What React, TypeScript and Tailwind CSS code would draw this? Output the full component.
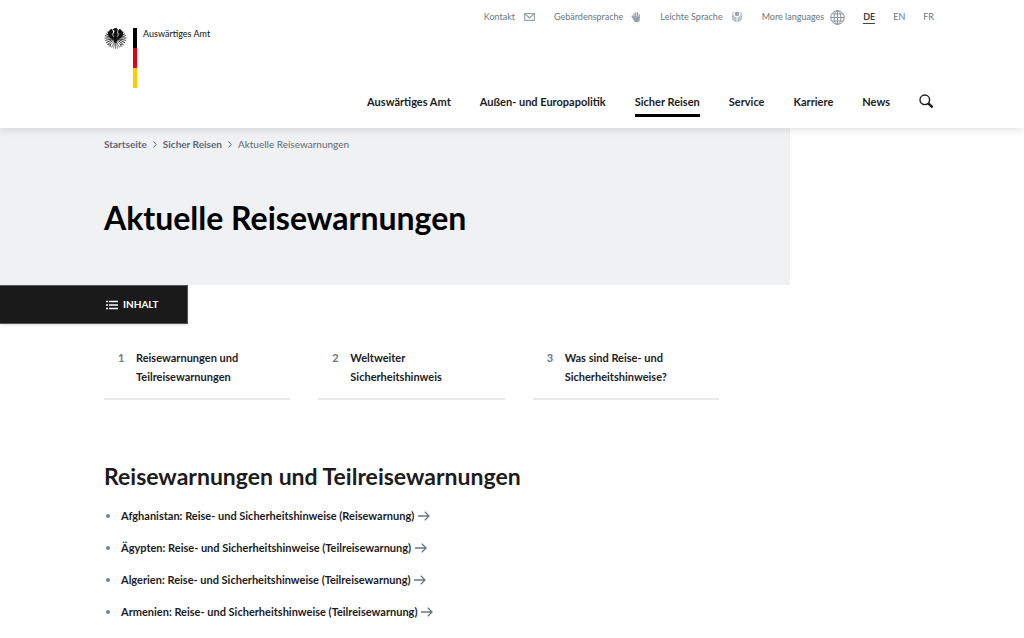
import React from 'react';

type IconProps = { className?: string };

const EagleIcon = ({ className }: IconProps) => (
  <svg className={className} viewBox="0 0 48 48" fill="none" aria-hidden="true">
    {/* wings */}
    <path d="M15 4C19 8 20 12 19 17L20 27C14 26 8 21 7 13C9 9 12 6 15 4Z" fill="#111" />
    <path d="M33 4C29 8 28 12 29 17L28 27C34 26 40 21 41 13C39 9 36 6 33 4Z" fill="#111" />
    <g stroke="#111" strokeWidth="1.8" strokeLinecap="round">
      <path d="M12 17L7 11M12 20L4 15M13 22L2 19M15 24L1 24M17 26L2 29M18 27L4 34M19 29L7 38" />
      <path d="M36 17L41 11M36 20L44 15M35 22L46 19M33 24L47 24M31 26L46 29M30 27L44 34M29 29L41 38" />
    </g>
    {/* head and body */}
    <path d="M17 7C18 4 21 2 25 2C29 3 30 6 28 9L29 15L29 28L26 35H22L19 28L19 16L22 9Z" fill="#111" />
    <path d="M22 7L17 7L20 10Z" fill="#fff" />
    <path d="M20 11L17 16L20 21M28 11L31 16L28 21" stroke="#fff" strokeWidth="1.5" />
    {/* tail and claws */}
    <g stroke="#333" strokeWidth="1.3" strokeLinecap="round">
      <path d="M24 33V47M22 34L20 46M26 34L28 46M21 34L16 44M27 34L32 44" />
      <path d="M20 32L13 38M13 38L8 39M13 38L10 43M13 38L14 43" />
      <path d="M28 32L35 38M35 38L40 39M35 38L38 43M35 38L34 43" />
    </g>
  </svg>
);

const MailIcon = ({ className }: IconProps) => (
  <svg className={className} viewBox="0 0 11 8" fill="none" stroke="currentColor" strokeWidth="1.2" aria-hidden="true">
    <rect x="0.6" y="0.6" width="9.8" height="6.8" />
    <path d="M1 1L5.5 5L10 1" />
  </svg>
);

const HandIcon = ({ className }: IconProps) => (
  <svg className={className} viewBox="0 0 20 24" fill="none" stroke="currentColor" strokeLinecap="round" aria-hidden="true">
    <path d="M6 13V5M9.5 12V2.5M13 12V3.5M16.5 14V7" strokeWidth="2.4" />
    <path d="M5 11L2 9C1 10 1 11 2 12L6 19L8 22H15L17 18V12Z" fill="currentColor" strokeWidth="1" />
  </svg>
);

const ReaderIcon = ({ className }: IconProps) => (
  <svg className={className} viewBox="0 0 24 24" fill="currentColor" aria-hidden="true">
    <circle cx="12" cy="6" r="4.5" />
    <path d="M1 8L11 13V23L3 18Z" opacity="0.8" />
    <path d="M23 8L13 13V23L21 18Z" opacity="0.8" />
    <path d="M7 2L3 5L5 10M17 2L21 5L19 10" fill="none" stroke="currentColor" strokeWidth="1.6" />
    <path d="M4 12L9 15M4.5 15L9 18M20 12L15 15M19.5 15L15 18" stroke="#fff" strokeWidth="0.8" />
  </svg>
);

const GlobeIcon = ({ className }: IconProps) => (
  <svg className={className} viewBox="0 0 15 15" fill="none" stroke="currentColor" aria-hidden="true">
    <circle cx="7.5" cy="7.5" r="6.8" />
    <ellipse cx="7.5" cy="7.5" rx="3.5" ry="6.8" />
    <path d="M7.5 0.7V14.3M0.7 7.5H14.3M1.8 4H13.2M1.8 11H13.2" />
  </svg>
);

const SearchIcon = ({ className }: IconProps) => (
  <svg className={className} viewBox="0 0 15 15" fill="none" stroke="currentColor" aria-hidden="true">
    <circle cx="5.8" cy="5.8" r="4.8" strokeWidth="1.4" />
    <path d="M9.3 9.3L13.6 13.3" strokeWidth="2.5" />
  </svg>
);

const ListIcon = ({ className }: IconProps) => (
  <svg className={className} viewBox="0 0 12 10" stroke="currentColor" aria-hidden="true">
    <path d="M0 1.5H2M3 1.5H12M0 5H2M3 5H12M0 8.5H2M3 8.5H12" strokeWidth="1.3" />
  </svg>
);

const ChevronIcon = ({ className }: IconProps) => (
  <svg className={className} viewBox="0 0 4 7" fill="none" stroke="currentColor" aria-hidden="true">
    <path d="M0.5 0.5L3.2 3.5L0.5 6.5" />
  </svg>
);

const ArrowIcon = ({ className }: IconProps) => (
  <svg className={className} viewBox="0 0 12 10" fill="none" stroke="currentColor" strokeWidth="1.3" aria-hidden="true">
    <path d="M0 5H11M6.8 0.8L11 5L6.8 9.2" />
  </svg>
);

const metaLinks = [
  { label: 'Kontakt', icon: <MailIcon className="ml-[9px] h-2 w-[11px]" /> },
  { label: 'Gebärdensprache', icon: <HandIcon className="ml-2 h-3 w-2.5" /> },
  { label: 'Leichte Sprache', icon: <ReaderIcon className="ml-2 h-3 w-3" /> },
];

const languages = ['DE', 'EN', 'FR'];

const navItems = ['Auswärtiges Amt', 'Außen- und Europapolitik', 'Sicher Reisen', 'Service', 'Karriere', 'News'];

const tocItems = [
  'Reisewarnungen und Teilreisewarnungen',
  'Weltweiter Sicherheitshinweis',
  'Was sind Reise- und Sicherheitshinweise?',
];

const warnings = [
  'Afghanistan: Reise- und Sicherheitshinweise (Reisewarnung)',
  'Ägypten: Reise- und Sicherheitshinweise (Teilreisewarnung)',
  'Algerien: Reise- und Sicherheitshinweise (Teilreisewarnung)',
  'Armenien: Reise- und Sicherheitshinweise (Teilreisewarnung)',
];

const Header = () => (
  <header className="relative flex h-32 justify-between bg-white pr-[90px] pl-[104px] shadow-[0_2px_8px_rgba(0,0,0,0.12)]">
    <a href="#" className="flex items-start pt-7 text-[9px] leading-3 text-[#111]">
      <EagleIcon className="-mt-px h-[22px] w-[23px]" />
      <span className="ml-1.5 flex h-[60px] w-1 flex-col">
        <span className="flex-1 bg-black" />
        <span className="flex-1 bg-[#e2001a]" />
        <span className="flex-1 bg-[#f8d000]" />
      </span>
      <span className="ml-1.5">Auswärtiges Amt</span>
    </a>

    <div className="flex flex-col items-end justify-between pt-[9px]">
      <div className="flex h-4 items-center text-[9px] text-[#6b7680]">
        {metaLinks.map(({ label, icon }) => (
          <a key={label} href="#" className="mr-[19px] flex items-center">
            {label}
            <span className="text-[#9aa3ab]">{icon}</span>
          </a>
        ))}
        <button type="button" className="flex items-center">
          More languages
          <GlobeIcon className="ml-1.5 h-[15px] w-[15px] text-[#8d969e]" />
        </button>
        <div className="ml-[18px] flex gap-[18px]">
          {languages.map((lang) => (
            <a
              key={lang}
              href="#"
              className={lang === 'DE' ? 'border-b border-[#444] font-bold text-[#444]' : 'border-b border-transparent'}
            >
              {lang}
            </a>
          ))}
        </div>
      </div>

      <nav className="mb-[11px] flex items-start gap-[29px] text-[11px] leading-4 font-bold text-[#1c1c1c]">
        {navItems.map((item) => (
          <a
            key={item}
            href="#"
            className={
              item === 'Sicher Reisen'
                ? 'border-b-[3px] border-black pb-1'
                : 'border-b-[3px] border-transparent pb-1'
            }
          >
            {item}
          </a>
        ))}
        <button type="button" aria-label="Suche">
          <SearchIcon className="h-[15px] w-[15px]" />
        </button>
      </nav>
    </div>
  </header>
);

const Breadcrumb = () => (
  <nav aria-label="Breadcrumb" className="flex items-center gap-1.5 text-[10px] leading-4 text-[#5f6973]">
    <a href="#" className="font-bold">Startseite</a>
    <ChevronIcon className="h-[7px] w-1" />
    <a href="#" className="font-bold">Sicher Reisen</a>
    <ChevronIcon className="h-[7px] w-1" />
    <span>Aktuelle Reisewarnungen</span>
  </nav>
);

const App: React.FC = () => {
  return (
    <div className="min-h-screen bg-white font-['Lato',sans-serif] text-[#1c1c1c]">
      <Header />

      <main>
        <section className="w-[77.15%] bg-[#eff1f3] pt-2 pb-[47px] pl-[104px]">
          <Breadcrumb />
          <h1 className="mt-[46px] text-[32px] leading-10 font-bold text-black">Aktuelle Reisewarnungen</h1>
        </section>

        <button
          type="button"
          className="flex h-[39px] w-[188px] items-center border border-l-0 border-[#555] bg-[#1a1a1a] pl-[106px] text-[10px] font-bold text-white shadow"
        >
          <ListIcon className="mr-[5px] h-2.5 w-3" />
          INHALT
        </button>

        <ol className="mt-6 mr-[305px] ml-[104px] grid grid-cols-3 gap-7">
          {tocItems.map((item, i) => (
            <li key={item} className="border-b-2 border-[#e8eaec] pb-3">
              <a href="#" className="flex text-[11px] leading-[19px] font-bold">
                <span className="w-8 shrink-0 pl-3.5 text-[#6b7680]">{i + 1}</span>
                <span className="max-w-[120px]">{item}</span>
              </a>
            </li>
          ))}
        </ol>

        <section className="mt-[60px] pb-3 pl-[104px]">
          <h2 className="text-[23px] leading-8 font-bold">Reisewarnungen und Teilreisewarnungen</h2>
          <ul className="mt-3.5 flex flex-col gap-3">
            {warnings.map((item) => (
              <li key={item} className="flex items-center">
                <span className="mr-[11px] ml-0.5 h-1 w-1 rounded-full bg-[#75808a]" />
                <a href="#" className="flex items-center gap-1 text-[11px] leading-5 font-bold">
                  {item}
                  <ArrowIcon className="h-2.5 w-3 text-[#6b7680]" />
                </a>
              </li>
            ))}
          </ul>
        </section>
      </main>
    </div>
  );
};

export default App;
